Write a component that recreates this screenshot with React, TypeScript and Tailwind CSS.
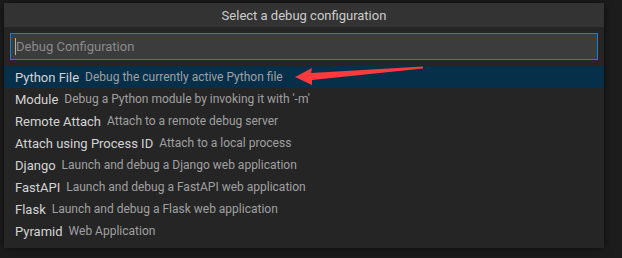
import React from "react";

const items: [string, string][] = [
  ["Python File", "Debug the currently active Python file"],
  ["Module", "Debug a Python module by invoking it with '-m'"],
  ["Remote Attach", "Attach to a remote debug server"],
  ["Attach using Process ID", "Attach to a local process"],
  ["Django", "Launch and debug a Django web application"],
  ["FastAPI", "Launch and debug a FastAPI web application"],
  ["Flask", "Launch and debug a Flask web application"],
  ["Pyramid", "Web Application"],
];

export default function App() {
  return (
    <div
      className="relative w-[622px] h-[258px] overflow-hidden bg-[#1c1c1c] pt-[3px] pl-[4px]"
      style={{ fontFamily: 'Roboto, "Noto Sans", sans-serif' }}
    >
      <div className="w-[600px] h-[245px] bg-[#252526] shadow-[0_0_8px_rgba(0,0,0,0.6)] flex flex-col">
        <div className="h-[24px] bg-[#333333] flex items-center justify-center text-[13px] text-[#cccccc] leading-none">
          Select a debug configuration
        </div>
        <div className="px-[6px] pt-[6px]">
          <div className="h-[27px] border border-[#1a7fcc] bg-[#3c3c3c] flex items-center pl-[4px]">
            <div className="w-px h-[17px] bg-[#aeafad]" />
            <span className="text-[13px] text-[#8b8b8b] leading-none">Debug Configuration</span>
          </div>
        </div>
        <div className="mt-[6px] flex flex-col">
          {items.map(([label, desc], i) => (
            <div
              key={label}
              className={
                "h-[22px] flex items-center pl-[11px] gap-[6px] leading-none whitespace-nowrap " +
                (i === 0 ? "bg-[#062f4a]" : "")
              }
            >
              <span className="text-[13px] text-[#d4d4d4]">{label}</span>
              <span className="text-[12px] text-[#a0a0a0]">{desc}</span>
            </div>
          ))}
        </div>
      </div>
      <svg
        className="absolute left-0 top-0 pointer-events-none"
        width="622"
        height="258"
        viewBox="0 0 622 258"
      >
        <polygon
          points="295,77 312,68 311,73 423,66.5 423,68.5 312,80 312,85"
          fill="#fb3a3d"
        />
      </svg>
    </div>
  );
}
